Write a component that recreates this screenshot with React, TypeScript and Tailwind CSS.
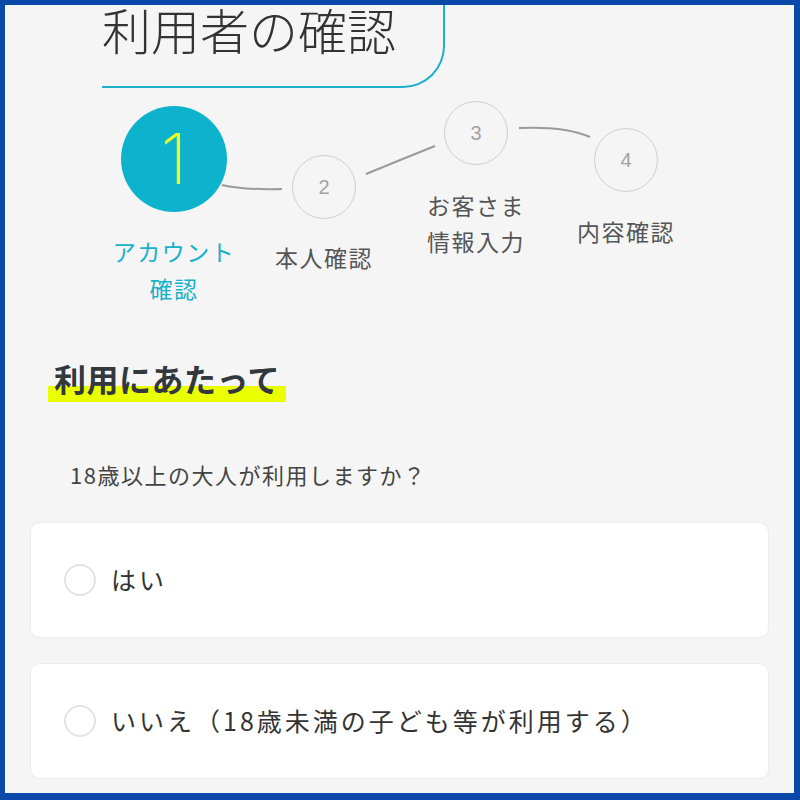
import React from "react";

const steps = [
  { n: "2", left: 287, top: 67, label: ["本人確認"], labelTop: 151, cx: 319 },
  { n: "3", left: 439, top: 13, label: ["お客さま", "情報入力"], labelTop: 99, cx: 471 },
  { n: "4", left: 589, top: 40, label: ["内容確認"], labelTop: 125, cx: 621 },
];

function Stepper() {
  return (
    <div className="relative h-[225px]">
      {/* connector lines behind the step circles */}
      <svg className="absolute inset-0" width="790" height="225" fill="none" stroke="#9a9a9a" strokeWidth="2">
        <path d="M217 97 Q238 102 277 101" />
        <path d="M361 86 Q395 72 430 58" />
        <path d="M514 40 Q560 38 585 49" />
      </svg>

      <div className="absolute left-[116px] top-[18px] w-[106px] h-[106px] rounded-full bg-[#0db3cc] flex items-center justify-center">
        <span className="text-[70px] leading-none font-extralight text-[#e8ff24] font-['Inter',sans-serif]">1</span>
      </div>
      <div className="absolute top-[145px] left-[69px] w-[200px] text-center text-[23px] tracking-[1.5px] leading-[37px] text-[#17b1c9]">
        アカウント
        <br />
        確認
      </div>

      {steps.map((s) => (
        <React.Fragment key={s.n}>
          <div
            className="absolute w-[64px] h-[64px] rounded-full border border-[#cfcfcf] bg-[#f5f5f5] flex items-center justify-center text-[20px] font-medium text-[#a3a3a3] font-['Liberation_Sans',sans-serif]"
            style={{ left: s.left, top: s.top }}
          >
            {s.n}
          </div>
          <div
            className="absolute w-[200px] text-center text-[23px] tracking-[1.5px] leading-[36px] text-[#555]"
            style={{ left: s.cx - 100, top: s.labelTop }}
          >
            {s.label.map((l) => (
              <div key={l}>{l}</div>
            ))}
          </div>
        </React.Fragment>
      ))}
    </div>
  );
}

function Option({ label }: { label: string }) {
  return (
    <label className="flex items-center gap-[15px] h-[116px] pl-[33px] bg-white rounded-[10px] border border-[#ececec]">
      <span className="w-[32px] h-[32px] rounded-full border-2 border-[#e4e4e4]" />
      <span className="text-[25px] tracking-[3px] text-[#333]">{label}</span>
    </label>
  );
}

export default function App() {
  return (
    <div
      className="w-[800px] h-[800px] overflow-hidden bg-[#f5f5f5] border-[#0a48aa] border-t-[5px] border-l-[5px] border-r-[6px] border-b-[7px]"
      style={{ fontFamily: '"Noto Sans CJK JP", "Noto Sans", sans-serif' }}
    >
      <div className="pl-[97px]">
        <div className="w-[343px] h-[83px] border-r-2 border-b-2 border-[#1bb2c9] rounded-br-[42px]">
          <h1 className="text-[49px] leading-[48px] font-extralight text-[#333]">利用者の確認</h1>
        </div>
      </div>

      <Stepper />

      <div className="pt-[45px] pl-[43px]">
        <h2 className="inline-block pl-[6px] pr-[6px] pb-[4px] text-[32px] tracking-[0.5px] leading-[40px] font-bold text-[#33383d] bg-[linear-gradient(transparent_28px,#eaff00_28px)]">
          利用にあたって
        </h2>
      </div>

      <p className="mt-[56px] pl-[65px] text-[22px] tracking-[1.5px] leading-[32px] text-[#444]">18歳以上の大人が利用しますか？</p>

      <div className="mt-[32px] mx-[25px] flex flex-col gap-[25px]">
        <Option label="はい" />
        <Option label="いいえ（18歳未満の子ども等が利用する）" />
      </div>
    </div>
  );
}
